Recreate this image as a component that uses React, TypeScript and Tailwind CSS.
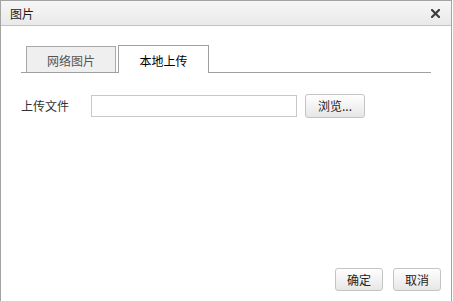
import React from "react";

const font = { fontFamily: '"Noto Sans CJK SC", "Liberation Sans", sans-serif' };

function Button({ children, className = "" }: { children: React.ReactNode; className?: string }) {
  return (
    <button
      className={`h-[23px] rounded-[3px] border border-[#c4c4c4] bg-gradient-to-b from-white to-[#e6e6e6] text-[12px] leading-none text-[#222] ${className}`}
    >
      {children}
    </button>
  );
}

export default function App() {
  return (
    <div className="w-[453px] h-[301px] bg-white overflow-hidden" style={font}>
      <div className="w-[452px] h-[310px] border-x border-t border-[#a3a3a3] flex flex-col">
        {/* Title bar */}
        <div className="h-[25px] shrink-0 flex items-center justify-between pl-[9px] pr-[11px] border-b border-[#c3c3c3] bg-gradient-to-b from-[#f7f7f7] to-[#e9e9e9]">
          <span className="text-[12px] leading-none text-[#1a1a1a] pt-[1px]">图片</span>
          <svg width="9" height="9" viewBox="0 0 9 9">
            <path d="M1 1 L8 8 M8 1 L1 8" stroke="#3d3d3d" strokeWidth="2.2" strokeLinecap="square" />
          </svg>
        </div>

        {/* Body */}
        <div className="flex flex-col h-[275px]">
          {/* Tabs */}
          <div className="mt-[19px] ml-[20px] w-[410px] border-b border-[#a0a0a0] flex items-end pl-[5px] gap-[2px]">
            <div className="w-[90px] h-[26px] border-x border-t border-[#a8a8a8] bg-[#efefef] flex items-center justify-center text-[12px] text-[#555] pt-[3px]">
              网络图片
            </div>
            <div className="w-[91px] h-[28px] -mb-px border-x border-t border-[#a0a0a0] bg-white flex items-center justify-center text-[12px] text-black pt-[3px]">
              本地上传
            </div>
          </div>

          {/* Upload row */}
          <div className="mt-[21px] ml-[20px] flex items-center">
            <span className="w-[70px] text-[12px] text-[#333]">上传文件</span>
            <div className="w-[206px] h-[22px] border border-[#c8c8c8] bg-white" />
            <Button className="ml-[8px] w-[60px] h-[24px]">浏览...</Button>
          </div>

          {/* Footer */}
          <div className="mt-auto mb-[10px] flex justify-end gap-[10px] pr-[10px]">
            <Button className="w-[48px]">确定</Button>
            <Button className="w-[48px]">取消</Button>
          </div>
        </div>
      </div>
    </div>
  );
}
